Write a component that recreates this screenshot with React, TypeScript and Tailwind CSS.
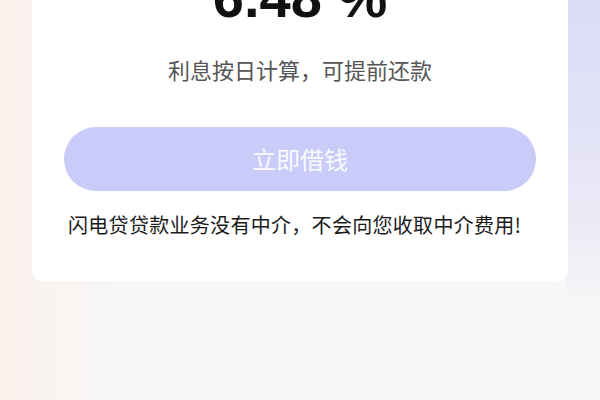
import React from "react";

export default function App() {
  return (
    <div
      className="relative w-[600px] h-[400px] overflow-hidden bg-[#f7f7f7] flex flex-col items-center"
      style={{ fontFamily: '"Noto Sans CJK SC", "Noto Sans", sans-serif' }}
    >
      <div className="absolute inset-0 bg-[linear-gradient(90deg,#fbf1ec_0%,#f9f4f1_8%,#f7f7f7_20%,#f7f7f7_100%)]" />
      <div className="absolute right-0 top-0 w-[34px] h-[310px] bg-[linear-gradient(180deg,#dcdcf8_0%,#e2e2f7_40%,#ececf6_75%,#f7f7f7_100%)]" />
      <div className="relative mt-[-60px] w-[536px] rounded-[12px] bg-white flex flex-col items-center pt-[30px] pb-[42px]">
        <div
          className="text-[56px] leading-[56px] font-bold text-[#111] tracking-[0px]"
          style={{ fontFamily: '"Liberation Sans", Arial, sans-serif' }}
        >
          6.48 %
        </div>
        <div className="mt-[28px] text-[22px] leading-[30px] text-[#555]">
          利息按日计算，可提前还款
        </div>
        <div className="mt-[43px] w-[472px] h-[64px] rounded-full bg-[#c9ccf9] flex items-center justify-center text-[24px] text-white/90">
          立即借钱
        </div>
        <div className="mt-[20px] self-start ml-[36px] text-[20px] leading-[28px] tracking-[0.3px] text-[#1a1a1a]">
          闪电贷贷款业务没有中介，不会向您收取中介费用!
        </div>
      </div>
    </div>
  );
}
